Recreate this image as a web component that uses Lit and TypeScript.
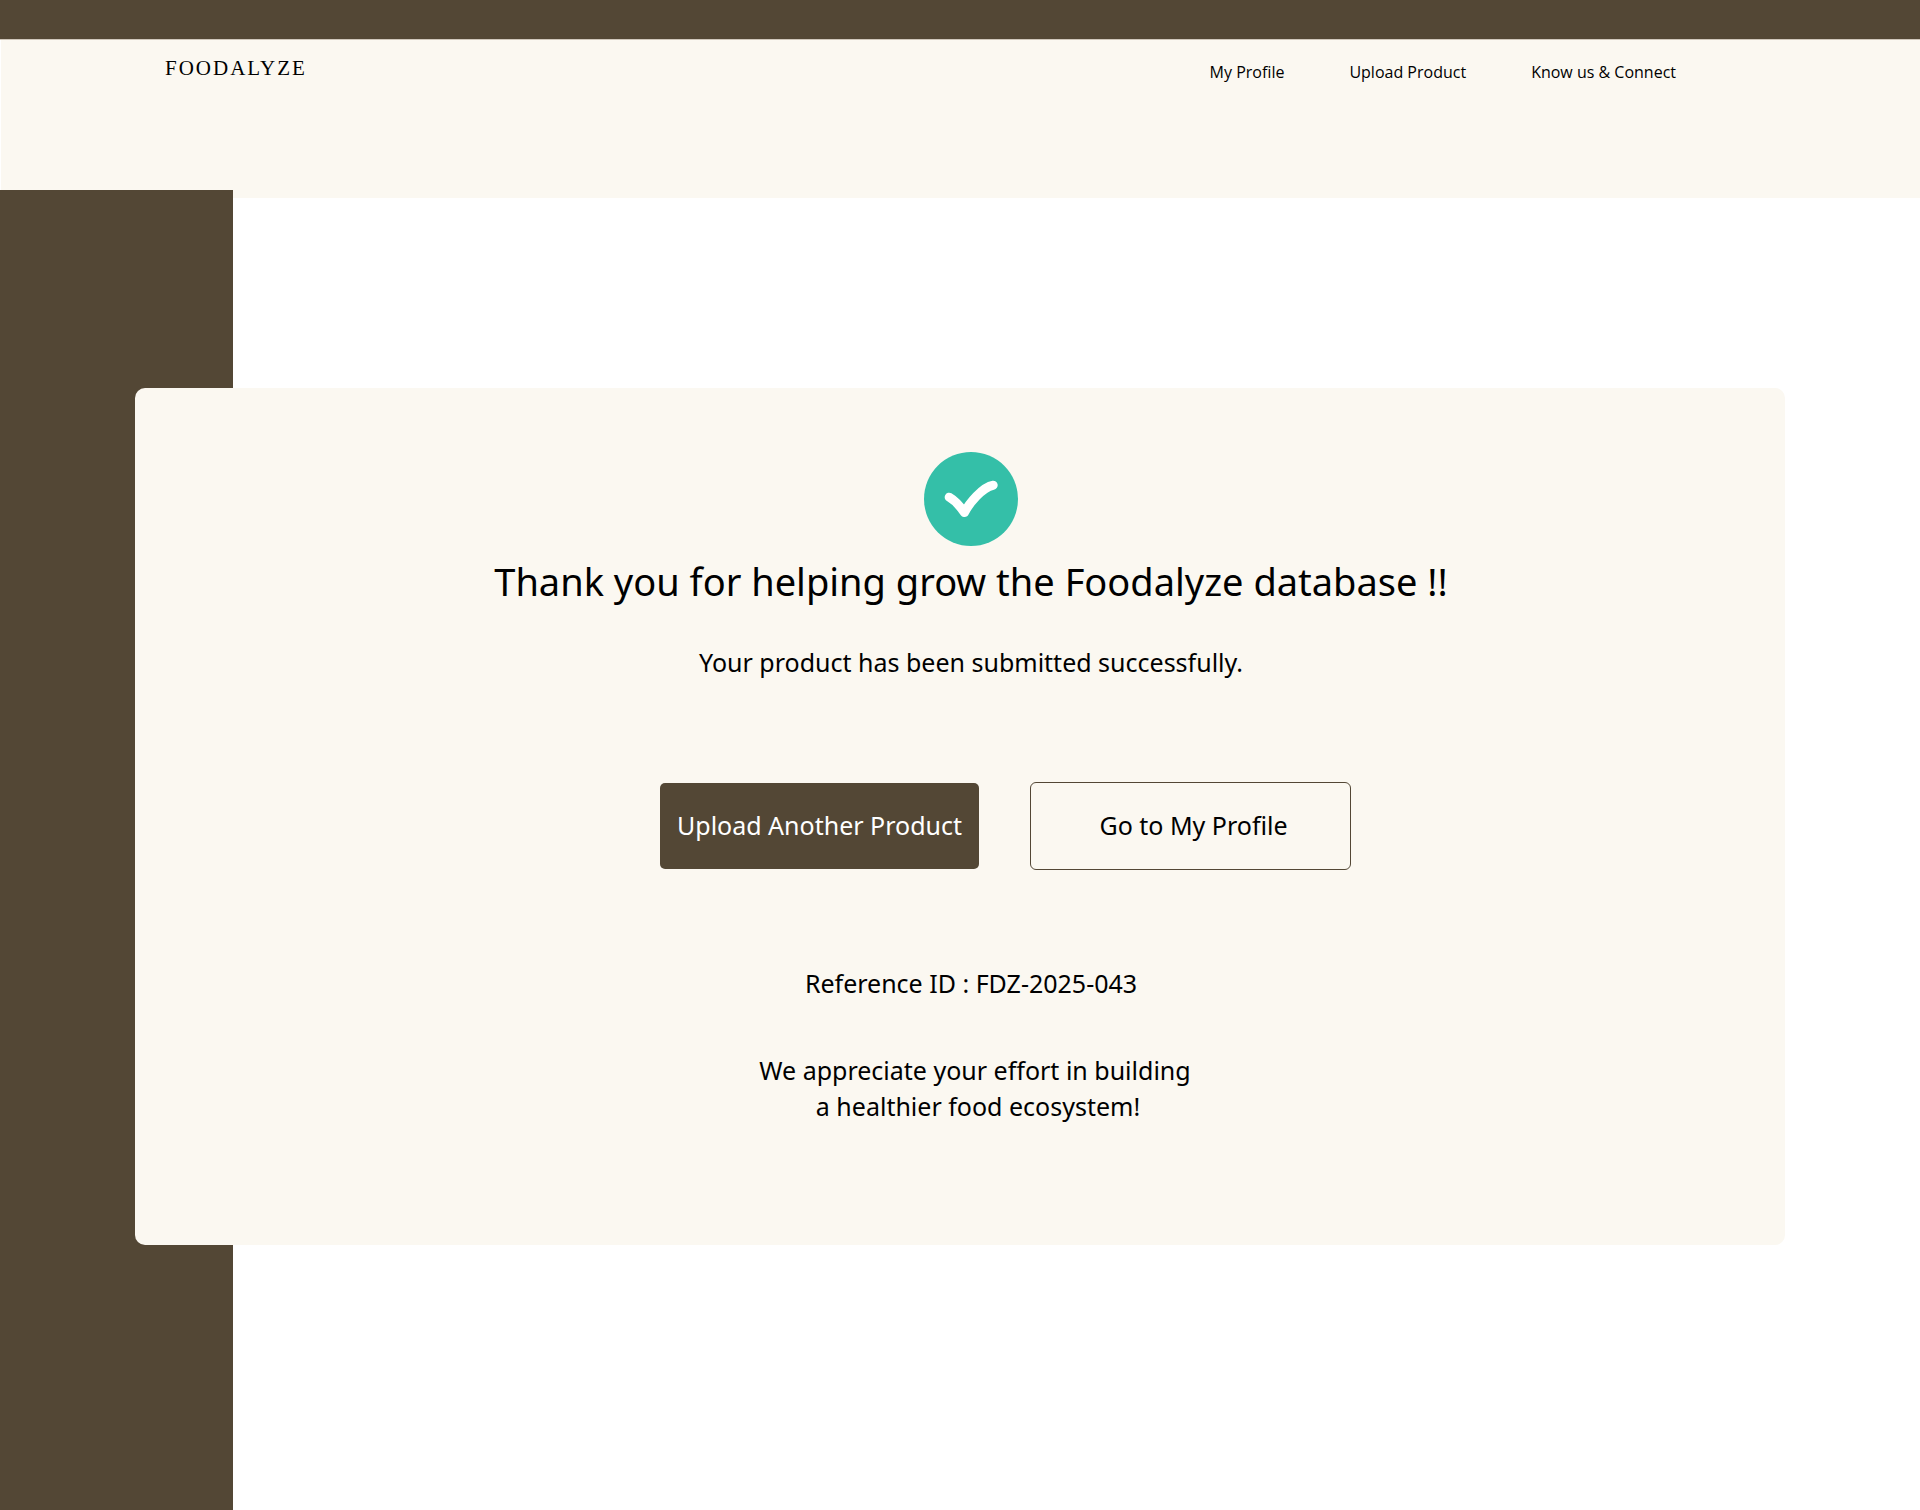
import { LitElement, html, css } from "lit";
import { customElement } from "lit/decorators.js";

@customElement("success-icon")
export class SuccessIcon extends LitElement {
  static styles = css`
    :host {
      display: block;
      width: 94px;
      height: 94px;
    }
    .icon {
      display: block;
      width: 100%;
      height: 100%;
    }
  `;

  render() {
    return html`
      <svg class="icon" viewBox="0 0 94 94" aria-hidden="true">
        <circle cx="47" cy="47" r="47" fill="#34bfa8" />
        <path
          d="M25.2 45.2 C31 48.5 35.5 53.5 40.5 60.6 C45 51.5 58.5 35 69.2 33.2"
          fill="none"
          stroke="#ffffff"
          stroke-width="9"
          stroke-linecap="round"
          stroke-linejoin="round"
        />
      </svg>
    `;
  }
}

@customElement("site-header")
export class SiteHeader extends LitElement {
  static styles = css`
    :host {
      display: block;
    }
    .strip {
      height: 39px;
      background: #534735;
      border-bottom: 1px solid #d0c7bb;
    }
    .bar {
      display: flex;
      flex-wrap: wrap;
      justify-content: space-between;
      align-items: flex-start;
      gap: 16px 64px;
      box-sizing: border-box;
      min-height: 158px;
      padding: 16px 244px 16px 164px;
      background: #fbf8f1;
      border-left: 1px solid #ffffff;
    }
    .brand {
      color: #000000;
      font: 21px/24px "Liberation Serif", "Times New Roman", serif;
      letter-spacing: 2px;
      text-decoration: none;
    }
    .nav {
      display: flex;
      flex-wrap: wrap;
      gap: 8px 65px;
      padding-top: 4px;
    }
    .link {
      color: #000000;
      font: 16px/24px "Open Sans", sans-serif;
      text-decoration: none;
    }
    @media (max-width: 1100px) {
      .bar {
        padding-left: 24px;
        padding-right: 24px;
      }
      .nav {
        gap: 8px 24px;
      }
    }
  `;

  render() {
    return html`
      <header>
        <div class="strip"></div>
        <div class="bar">
          <a class="brand" href="#">FOODALYZE</a>
          <nav class="nav">
            <a class="link" href="#profile">My Profile</a>
            <a class="link" href="#upload">Upload Product</a>
            <a class="link" href="#connect">Know us &amp; Connect</a>
          </nav>
        </div>
      </header>
    `;
  }
}

@customElement("app-root")
export class AppRoot extends LitElement {
  static styles = css`
    :host {
      display: flex;
      flex-direction: column;
      min-height: 100vh;
      background: #ffffff;
      color: #000000;
      font: 25px/36px "Noto Sans", sans-serif;
    }
    .page {
      display: grid;
      grid-template-columns: 233px 1fr;
      flex: 1;
      margin-top: -8px;
    }
    .rail {
      grid-area: 1 / 1;
      background: #534735;
    }
    .card {
      grid-area: 1 / 1 / 2 / 3;
      display: flex;
      flex-direction: column;
      align-items: center;
      align-self: start;
      margin: 198px 135px 80px;
      padding: 64px 0 121px 22px;
      border-radius: 10px;
      background: #fbf8f1;
      text-align: center;
    }
    .title {
      margin: 8px 0 36px;
      font-size: 38px;
      line-height: 54px;
      font-weight: 400;
    }
    .text {
      margin: 0;
    }
    .actions {
      display: flex;
      flex-wrap: wrap;
      justify-content: center;
      align-items: center;
      gap: 24px 51px;
      margin: 102px 0 95px;
      padding-left: 69px;
    }
    .button {
      box-sizing: border-box;
      width: 319px;
      height: 86px;
      padding: 0 0 2px;
      border: 0;
      border-radius: 5px;
      background: #534735;
      color: #ffffff;
      font: inherit;
      cursor: pointer;
    }
    .outlined {
      width: 321px;
      height: 88px;
      padding-left: 6px;
      border: 1px solid #534735;
      border-radius: 6px;
      background: transparent;
      color: #000000;
    }
    .note {
      margin: 51px 0 0;
      padding-left: 8px;
    }
    .line {
      display: block;
    }
    .indented {
      padding-left: 6px;
    }
    @media (max-width: 1100px) {
      .page {
        grid-template-columns: 12% 1fr;
      }
      .card {
        margin: 80px 24px;
        padding: 48px 24px;
      }
      .actions {
        padding-left: 0;
      }
    }
  `;

  render() {
    return html`
      <site-header></site-header>
      <main class="page">
        <div class="rail"></div>
        <section class="card">
          <success-icon></success-icon>
          <h1 class="title">Thank you for helping grow the Foodalyze database !!</h1>
          <p class="text">Your product has been submitted successfully.</p>
          <div class="actions">
            <button class="button" type="button">Upload Another Product</button>
            <button class="button outlined" type="button">Go to My Profile</button>
          </div>
          <p class="text">Reference ID : FDZ-2025-043</p>
          <p class="note">
            <span class="line">We appreciate your effort in building</span>
            <span class="line indented">a healthier food ecosystem!</span>
          </p>
        </section>
      </main>
    `;
  }
}
